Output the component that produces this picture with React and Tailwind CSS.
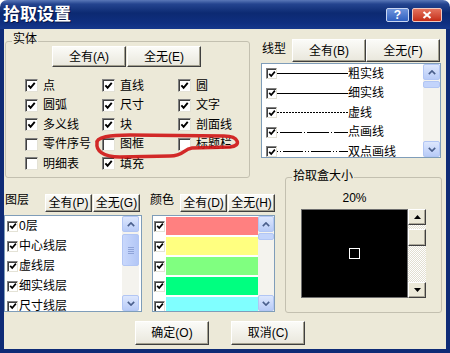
import React from 'react'

const ENTITIES = [
  ['点', true], ['直线', true], ['圆', true],
  ['圆弧', true], ['尺寸', true], ['文字', true],
  ['多义线', true], ['块', true], ['剖面线', true],
  ['零件序号', false], ['图框', false], ['标题栏', false],
  ['明细表', false], ['填充', true],
]

const LINE_TYPES = [
  { label: '粗实线', dash: undefined, width: 1.3 },
  { label: '细实线', dash: undefined, width: 1 },
  { label: '虚线', dash: '2 1', width: 1 },
  { label: '点画线', dash: '1 2 22 2', width: 1 },
  { label: '双点画线', dash: '1 2 1 2 20 2', width: 1 },
]

const LAYERS = ['0层', '中心线层', '虚线层', '细实线层', '尺寸线层']

const COLORS = ['bg-[#ff8080]', 'bg-[#ffff80]', 'bg-[#80ff80]', 'bg-[#00ff80]', 'bg-[#80ffff]']

function CheckBox({ on, small }) {
  return (
    <span
      className={`${small ? 'w-[11px] h-[11px]' : 'w-[13px] h-[13px]'} shrink-0 flex items-center justify-center bg-white border border-t-[#808080] border-l-[#808080] border-r-[#e4e2d6] border-b-[#e4e2d6] shadow-[inset_1px_1px_#404040]`}
    >
      {on && (
        <svg viewBox="0 0 10 10" className={small ? 'w-[8px] h-[8px]' : 'w-[9px] h-[9px]'}>
          <polyline points="1.5,4.8 4,7.5 8.6,2" fill="none" stroke="#000" strokeWidth="2.1" />
        </svg>
      )}
    </span>
  )
}

function Btn({ children, className = '' }) {
  return (
    <div
      className={`flex items-center justify-center bg-linear-to-b from-[#fbfbf8] to-[#e9e7dc] border border-t-white border-l-white border-r-[#3f3f3f] border-b-[#3f3f3f] shadow-[inset_-1px_-1px_#a3a08f] text-[12px] leading-none text-black ${className}`}
    >
      {children}
    </div>
  )
}

function ScrollBtn({ up }) {
  return (
    <div className="h-[16px] shrink-0 rounded-[2px] border border-[#b2c6f4] bg-linear-to-b from-[#dde7fd] to-[#b8cbf7] flex items-center justify-center">
      <svg viewBox="0 0 10 6" className="w-[8px] h-[5px]">
        <polyline points={up ? '1,5 5,1 9,5' : '1,1 5,5 9,1'} fill="none" stroke="#4a5f8c" strokeWidth="2" />
      </svg>
    </div>
  )
}

function XPScroll({ grip, className = '' }) {
  return (
    <div className={`shrink-0 flex flex-col bg-[#f4f3ee] ${className}`}>
      <ScrollBtn up />
      {grip ? (
        <div className="mt-[2px] h-[32px] rounded-[2px] border border-[#b2c6f4] bg-linear-to-r from-[#c9d8fc] to-[#b3c7f6] flex flex-col items-center justify-center gap-[1px]">
          <span className="w-[6px] h-px bg-[#8ea3d8]" />
          <span className="w-[6px] h-px bg-[#8ea3d8]" />
          <span className="w-[6px] h-px bg-[#8ea3d8]" />
          <span className="w-[6px] h-px bg-[#8ea3d8]" />
        </div>
      ) : (
        <div className="mt-[1px] h-[7px] rounded-[2px] border border-[#b2c6f4] bg-[#c3d4fb]" />
      )}
      <div className="flex-1" />
      <ScrollBtn />
    </div>
  )
}

function Raised({ children, className = '' }) {
  return (
    <div
      className={`bg-[#ece9d8] border border-t-white border-l-white border-r-[#404040] border-b-[#404040] shadow-[inset_-1px_-1px_#aca899] flex items-center justify-center ${className}`}
    >
      {children}
    </div>
  )
}

function LineSample({ dash, width }) {
  return (
    <svg width="71" height="3" className="shrink-0" shapeRendering="crispEdges">
      <line x1="0" y1="1.5" x2="71" y2="1.5" stroke="#000" strokeWidth={width} strokeDasharray={dash} />
    </svg>
  )
}

export default function App() {
  return (
    <div className="relative w-[450px] h-[353px] overflow-hidden bg-white flex flex-col font-['Liberation_Sans','Noto_Sans_CJK_SC',sans-serif] text-[12px] leading-[14px] text-black">
      {/* title bar */}
      <div className="h-[29px] shrink-0 rounded-t-[7px] bg-[linear-gradient(#5a78b8_0%,#24448f_14%,#0c2a72_45%,#0f2f80_80%,#16388c_100%)] flex items-center pl-[3px] pr-[8px]">
        <span className="text-white font-bold text-[17px] leading-none [text-shadow:1px_1px_#061648]">拾取设置</span>
        <div className="ml-auto flex gap-[3px]">
          <div className="w-[23px] h-[14px] rounded-[2px] border border-[#c9d6f2] bg-linear-to-b from-[#6f94dc] to-[#2f5fc0] flex items-center justify-center text-white font-bold text-[12px] leading-none">?</div>
          <div className="w-[30px] h-[14px] rounded-[2px] border border-[#f0c8c0] bg-linear-to-b from-[#e4715c] to-[#c42a14] flex items-center justify-center">
            <svg viewBox="0 0 10 8" className="w-[10px] h-[8px]">
              <path d="M1.5 1 L8.5 7 M8.5 1 L1.5 7" stroke="#fff" strokeWidth="2" />
            </svg>
          </div>
        </div>
      </div>

      {/* dialog body */}
      <div className="flex-1 flex flex-col bg-[#ece9d8] border-x-[4px] border-b-[4px] border-[#0e2b76]">
        <div className="grid grid-cols-[254px_26px_162px] grid-rows-[139px_11px_137px]">
          {/* 实体 */}
          <div className="col-start-1 row-start-1 row-span-2">
            <div className="relative ml-[1px] mt-[12px] w-[245px] h-[137px] rounded-[3px] border border-[#c3c0b0]">
              <span className="absolute left-[6px] -top-[10px] px-[1px] bg-[#ece9d8]">实体</span>
              <div className="flex pl-[46px] gap-[1px] mt-[4px]">
                <Btn className="w-[74px] h-[21px]">全有(A)</Btn>
                <Btn className="w-[74px] h-[21px]">全无(E)</Btn>
              </div>
              <div className="grid grid-cols-[77px_76px_76px] pl-[19px] mt-[9px]">
                {ENTITIES.map(([label, on]) => (
                  <div key={label} className="h-[19.5px] flex items-center gap-[5px]">
                    <CheckBox on={on} />
                    <span className="whitespace-nowrap">{label}</span>
                  </div>
                ))}
              </div>
            </div>
          </div>

          {/* 线型 */}
          <div className="col-start-2 col-span-2 row-start-1">
            <div className="flex items-start mt-[10px] ml-[4px]">
              <span className="w-[30px] mt-[3px]">线型</span>
              <Btn className="w-[74px] h-[23px]">全有(B)</Btn>
              <Btn className="w-[74px] h-[23px]">全无(F)</Btn>
            </div>
            <div className="ml-[3px] mt-[1px] w-[180px] h-[95px] bg-white border border-[#7f9db9] flex overflow-hidden">
              <div className="flex-1">
                {LINE_TYPES.map((row) => (
                  <div key={row.label} className="h-[19.5px] flex items-center pl-[4px]">
                    <CheckBox on small />
                    <LineSample dash={row.dash} width={row.width} />
                    <span className="whitespace-nowrap">{row.label}</span>
                  </div>
                ))}
              </div>
              <XPScroll className="w-[17px]" />
            </div>
          </div>

          {/* 图层 + 颜色 */}
          <div className="col-start-1 col-span-2 row-start-3 flex">
            <div className="w-[138px]">
              <div className="flex items-start mt-[14px]">
                <span className="w-[41px] pl-[1px]">图层</span>
                <div className="flex gap-[1px] mt-[1px]">
                  <Btn className="w-[47px] h-[18px]">全有(P)</Btn>
                  <Btn className="w-[47px] h-[18px]">全无(G)</Btn>
                </div>
              </div>
              <div className="mt-[3px] h-[97px] bg-white border border-[#7f9db9] flex overflow-hidden">
                <div className="flex-1">
                  {LAYERS.map((name) => (
                    <div key={name} className="h-[20px] flex items-center pl-[2px] gap-[1px]">
                      <CheckBox on small />
                      <span className="whitespace-nowrap">{name}</span>
                    </div>
                  ))}
                </div>
                <XPScroll grip className="w-[17px] mr-[2px]" />
              </div>
            </div>

            <div className="w-[134px] ml-[4px]">
              <div className="flex items-start mt-[14px]">
                <span className="w-[34px] pl-[4px]">颜色</span>
                <div className="flex gap-[1px] mt-[1px]">
                  <Btn className="w-[47px] h-[18px]">全有(D)</Btn>
                  <Btn className="w-[47px] h-[18px]">全无(H)</Btn>
                </div>
              </div>
              <div className="ml-[6px] mt-[3px] w-[123px] h-[97px] bg-white border border-[#7f9db9] flex overflow-hidden">
                <div className="flex-1">
                  {COLORS.map((c) => (
                    <div key={c} className="h-[20px] flex items-center pl-[1px]">
                      <CheckBox on small />
                      <span className={`ml-[1px] w-[92px] h-[18px] ${c}`} />
                    </div>
                  ))}
                </div>
                <XPScroll className="w-[16px]" />
              </div>
            </div>
          </div>

          {/* 拾取盒大小 */}
          <div className="col-start-3 row-start-2 row-span-2">
            <div className="relative ml-[1px] mt-[9px] w-[157px] h-[136px] rounded-[3px] border border-[#c3c0b0]">
              <span className="absolute left-[6px] -top-[9px] px-[1px] bg-[#ece9d8]">拾取盒大小</span>
              <div className="pl-[15px] mt-[13px]">
                <div className="w-[107px] text-center">20%</div>
                <div className="flex mt-[4px]">
                  <div className="w-[107px] h-[89px] bg-black border border-[#6e6e6e] flex items-center justify-center">
                    <span className="w-[11px] h-[11px] border border-white" />
                  </div>
                  <div className="w-[18px] h-[89px] flex flex-col bg-[repeating-conic-gradient(#ffffff_0%_25%,#e2dfd1_0%_50%)] bg-size-[2px_2px]">
                    <Raised className="h-[16px]">
                      <svg viewBox="0 0 7 4" className="w-[7px] h-[4px]"><polygon points="3.5,0 7,4 0,4" fill="#000" /></svg>
                    </Raised>
                    <Raised className="h-[17px] mt-[4px]" />
                    <div className="flex-1" />
                    <Raised className="h-[16px]">
                      <svg viewBox="0 0 7 4" className="w-[7px] h-[4px]"><polygon points="0,0 7,0 3.5,4" fill="#000" /></svg>
                    </Raised>
                  </div>
                </div>
              </div>
            </div>
          </div>
        </div>

        <div className="flex pl-[131px] gap-[22px] mt-[5px]">
          <Btn className="w-[74px] h-[24px]">确定(O)</Btn>
          <Btn className="w-[74px] h-[24px]">取消(C)</Btn>
        </div>
      </div>

      {/* hand-drawn red marker */}
      <svg className="absolute inset-0 pointer-events-none" width="450" height="353" viewBox="0 0 450 353">
        <path
          d="M97 143 C96 137 110 135 130 135 L224 136 C239 136 242 146 230 147 L192 148 C183 149 184 156 170 156 L120 157 C102 157 96 150 97 143 Z"
          fill="none"
          stroke="#d01515"
          strokeWidth="3.5"
          opacity="0.9"
          style={{ filter: 'blur(0.5px)' }}
        />
      </svg>
    </div>
  )
}
